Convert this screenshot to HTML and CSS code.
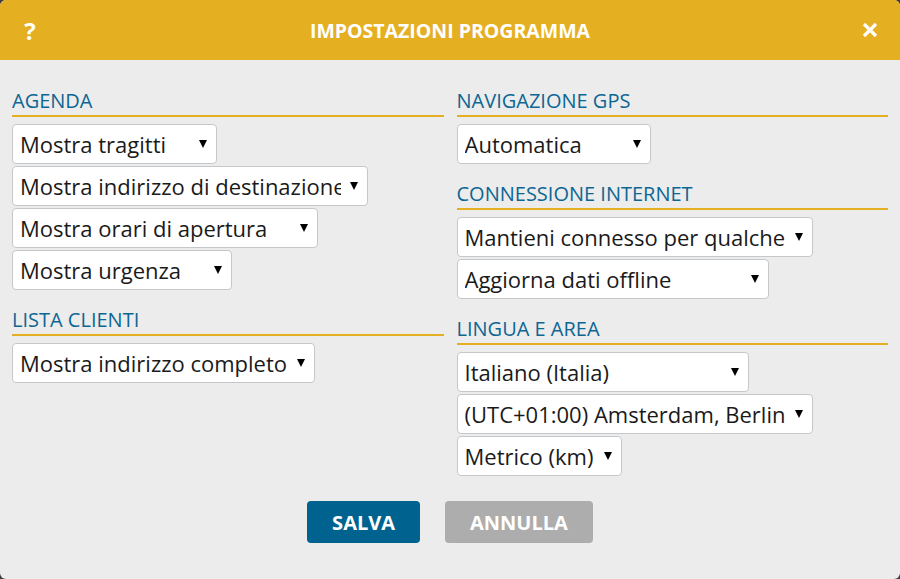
FILE: index.html
```html
<!DOCTYPE html>
<html lang="it">
<head>
    <meta charset="UTF-8">
    <meta name="viewport" content="width=device-width, initial-scale=1.0">
    <title>Impostazioni programma</title>
    <link rel="stylesheet" href="styles.css">
</head>
<body>
    <div class="dialog">
        <div class="dialog-header">
            <span class="help">?</span>
            <h1>IMPOSTAZIONI PROGRAMMA</h1>
            <span class="close">
                <svg width="16" height="16" viewBox="0 0 16 16">
                    <path d="M2 2 L14 14 M14 2 L2 14" stroke="#fff" stroke-width="3.2" fill="none"/>
                </svg>
            </span>
        </div>

        <div class="settings">
            <div class="column">
                <div class="section">
                    <h3>AGENDA</h3>
                    <label class="select w-205"><select><option>Mostra tragitti</option></select></label>
                    <label class="select w-356"><select><option>Mostra indirizzo di destinazione</option></select></label>
                    <label class="select w-306"><select><option>Mostra orari di apertura</option></select></label>
                    <label class="select w-220"><select><option>Mostra urgenza</option></select></label>
                </div>
                <div class="section">
                    <h3>LISTA CLIENTI</h3>
                    <label class="select w-303"><select><option>Mostra indirizzo completo</option></select></label>
                </div>
            </div>

            <div class="column">
                <div class="section">
                    <h3>NAVIGAZIONE GPS</h3>
                    <label class="select w-194"><select><option>Automatica</option></select></label>
                </div>
                <div class="section">
                    <h3>CONNESSIONE INTERNET</h3>
                    <label class="select w-356"><select><option>Mantieni connesso per qualche minuto</option></select></label>
                    <label class="select w-312"><select><option>Aggiorna dati offline</option></select></label>
                </div>
                <div class="section">
                    <h3>LINGUA E AREA</h3>
                    <label class="select w-292"><select><option>Italiano (Italia)</option></select></label>
                    <label class="select w-356"><select><option>(UTC+01:00) Amsterdam, Berlino, Berna</option></select></label>
                    <label class="select w-165"><select><option>Metrico (km)</option></select></label>
                </div>
            </div>
        </div>

        <div class="actions">
            <button type="submit" class="btn btn-save">SALVA</button>
            <button type="button" class="btn btn-cancel">ANNULLA</button>
        </div>
    </div>
</body>
</html>
```

FILE: styles.css
```css
body {
    margin: 0;
    background: #3c3c3c;
    font-family: "Open Sans", "Liberation Sans", sans-serif;
}

.dialog {
    width: 900px;
    height: 579px;
    background: #ececec;
    border-radius: 6px;
    overflow: hidden;
}

.dialog-header {
    height: 60px;
    background: #e5af22;
    color: #fff;
    display: grid;
    grid-template-columns: 60px 1fr 60px;
    align-items: center;
}

.dialog-header h1 {
    margin: 0;
    font-size: 19.5px;
    font-weight: bold;
    text-align: center;
}

.help {
    font-size: 24px;
    font-weight: bold;
    text-align: center;
}

.close {
    display: flex;
    justify-content: center;
    align-items: center;
}

.settings {
    display: grid;
    grid-template-columns: 1fr 1fr;
    column-gap: 13px;
    padding: 29px 12px 0;
}

.section + .section {
    margin-top: 18px;
}

h3 {
    margin: 0 0 7px;
    padding-bottom: 2px;
    border-bottom: 2px solid #e5af22;
    color: #0d6693;
    font-size: 20px;
    font-weight: normal;
    line-height: 24px;
}

/* custom dropdowns */
.select {
    position: relative;
    display: block;
    height: 40px;
    margin-bottom: 2px;
}

.select::after {
    content: "";
    position: absolute;
    right: 10px;
    top: 16px;
    border-left: 4px solid transparent;
    border-right: 4px solid transparent;
    border-top: 8px solid #000;
    pointer-events: none;
}

.select select {
    -webkit-appearance: none;
    appearance: none;
    width: 100%;
    height: 40px;
    margin: 0;
    padding: 0 26px 0 7px;
    font-family: inherit;
    font-size: 22px;
    color: #1a1a1a;
    background: #fff;
    border: 1px solid #c5c8ca;
    border-radius: 4px;
    box-sizing: border-box;
}

.w-165 { width: 165px; }
.w-194 { width: 194px; }
.w-205 { width: 205px; }
.w-220 { width: 220px; }
.w-292 { width: 292px; }
.w-303 { width: 303px; }
.w-306 { width: 306px; }
.w-312 { width: 312px; }
.w-356 { width: 356px; }

.actions {
    display: flex;
    justify-content: center;
    gap: 25px;
    margin-top: 23px;
}

.btn {
    height: 42px;
    padding: 0 25px;
    border: none;
    border-radius: 4px;
    color: #fff;
    font-family: inherit;
    font-size: 20px;
    font-weight: bold;
    cursor: pointer;
}

.btn-save {
    background: #00628f;
}

.btn-cancel {
    background: #adadad;
}
```
